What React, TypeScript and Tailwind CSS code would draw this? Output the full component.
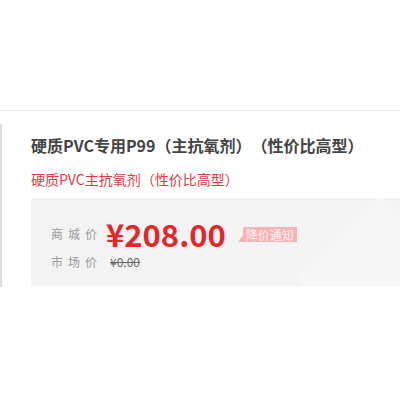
export default function App() {
  return (
    <div className="h-[400px] w-[400px] overflow-hidden bg-white font-['Noto_Sans_CJK_SC',sans-serif] [text-spacing-trim:space-all]">
      <div className="h-[111px] border-b border-[#eeeeee]" />
      <div className="mt-[13px] flex h-[163px] border-l-2 border-[#dddddd]">
        <div className="flex-1 pl-[29px] pt-[9px]">
          <h1 className="text-[16px] font-bold leading-[24px] text-[#444444]">
            硬质PVC专用P99（主抗氧剂）（性价比高型）
          </h1>
          <p className="mt-[12px] text-[14px] leading-[20px] text-[#e4393c]">
            硬质PVC主抗氧剂（性价比高型）
          </p>
          <div className="relative mt-[9px] h-[88px] overflow-hidden bg-[#f3f3f3] pl-[20px] pt-[21px]">
            <div className="absolute -right-[40px] top-[20px] h-[120px] w-[120px] rotate-45 bg-[#f6f6f6]" />
            <div className="relative flex h-[30px] items-center">
              <span className="w-[55px] text-[12px] tracking-[5px] text-[#999999]">商城价</span>
              <span className="text-[31px] font-bold leading-[30px] text-[#e4262b]">¥208.00</span>
              <span className="relative ml-[17px] bg-[#f4b3b5] px-[3px] text-[12px] leading-[15px] text-[#fdf0f0]">
                <span className="absolute -left-[5px] bottom-0 h-0 w-0 border-b-[7px] border-l-[5px] border-b-[#f4b3b5] border-l-transparent" />
                降价通知
              </span>
            </div>
            <div className="relative mt-[4px] flex h-[18px] items-center">
              <span className="w-[59px] text-[12px] tracking-[5px] text-[#999999]">市场价</span>
              <span className="text-[12px] leading-[18px] text-[#666666] line-through">¥0.00</span>
            </div>
          </div>
        </div>
      </div>
    </div>
  );
}
